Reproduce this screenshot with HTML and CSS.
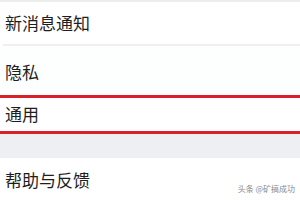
FILE: index.html
```html
<!DOCTYPE html>
<html lang="zh">
<head>
<meta charset="utf-8">
<link rel="stylesheet" href="styles.css">
</head>
<body>
<div class="page">
  <div class="topline"></div>
  <div class="row r1"><span>新消息通知</span></div>
  <div class="sep"></div>
  <div class="row r2"><span>隐私</span></div>
  <div class="row hl"><span>通用</span></div>
  <div class="band"></div>
  <div class="row r4"><span>帮助与反馈</span></div>
  <div class="wm">头条 @矿搞成功</div>
</div>
</body>
</html>
```
FILE: styles.css
```css
html, body {
  margin: 0;
  padding: 0;
  background: #fff;
}
.page {
  position: relative;
  width: 300px;
  height: 200px;
  overflow: hidden;
  font-family: "Noto Sans CJK SC", "Noto Sans", sans-serif;
  color: #1e1e1e;
  display: flex;
  flex-direction: column;
}
.topline {
  height: 2px;
  background: #ececec;
  flex: none;
}
.row {
  display: flex;
  align-items: center;
  padding-left: 5px;
  font-size: 17px;
  line-height: 20px;
  flex: none;
  box-sizing: border-box;
}
.r1 { height: 42px; }
.sep {
  height: 2px;
  margin-left: 3px;
  background: #efefef;
  flex: none;
}
.r2 {
  height: 49px;
  padding-top: 3px;
  background: #fdfefe;
}
.hl {
  height: 39px;
  border-top: 3px solid #da2129;
  border-bottom: 3px solid #da2129;
  padding-bottom: 2px;
}
.band {
  height: 24px;
  background: #eeeff3;
  flex: none;
}
.r4 {
  height: 38px;
  padding-top: 5px;
}
.wm {
  position: absolute;
  right: 5px;
  bottom: 6px;
  font-size: 8px;
  line-height: 10px;
  color: #8a8a8a;
}
```
